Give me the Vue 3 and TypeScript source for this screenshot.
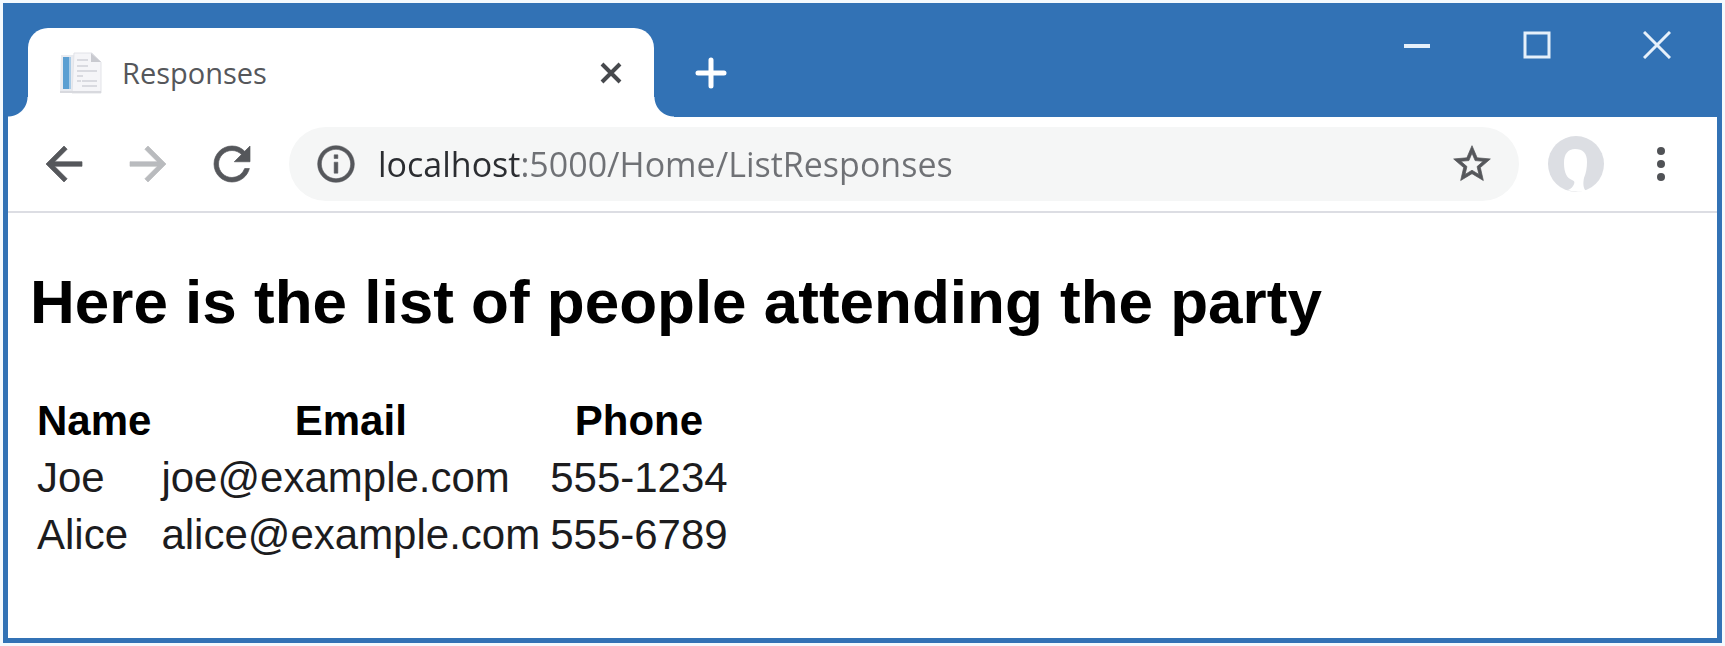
<script setup lang="ts">
import { ref } from 'vue'

interface Guest {
  name: string
  email: string
  phone: string
}

const address = ref('localhost:5000/Home/ListResponses')

const guests: Guest[] = [
  { name: 'Joe', email: 'joe@example.com', phone: '555-1234' },
  { name: 'Alice', email: 'alice@example.com', phone: '555-6789' },
]
</script>

<template>
  <div class="screen">
    <div class="window">
      <header class="titlebar">
        <div class="tab">
          <svg class="favicon" viewBox="0 0 42 42" aria-hidden="true">
            <path d="M1 3h14v38H0z" fill="#e9ebf0" />
            <path d="M3 5h6v32H3z" fill="#5b9fd2" />
            <path d="M9 5h2v32H9z" fill="#a9cce8" />
            <path d="M14 1h18l9 9v31H12z" fill="#f5f5f8" stroke="#e2e3e8" />
            <path d="M31 1v9h10z" fill="#c9cad0" />
            <path d="M17 8h11M17 14h11M17 19h20M17 24h6M17 29h4M22 29h15M22 34h15" stroke="#d9dae0" stroke-width="2" />
            <path d="M0 39h41v2H0z" fill="#d8d9de" />
          </svg>
          <span class="tab-title">Responses</span>
          <button class="tab-close" type="button" aria-label="Close tab">
            <svg viewBox="0 0 22 22" width="22" height="22"><path d="M2 2l18 18M20 2L2 20" stroke="#47494d" stroke-width="4" /></svg>
          </button>
        </div>
        <button class="new-tab" type="button" aria-label="New tab">
          <svg viewBox="0 0 32 32" width="32" height="32"><path d="M16 3v26M3 16h26" stroke="#fff" stroke-width="5" stroke-linecap="round" /></svg>
        </button>
        <div class="window-controls">
          <button type="button" aria-label="Minimize">
            <svg viewBox="0 0 28 28" width="28" height="28"><path d="M1 15h26" stroke="#e6f0fa" stroke-width="4" /></svg>
          </button>
          <button type="button" aria-label="Maximize">
            <svg viewBox="0 0 28 28" width="28" height="28"><path d="M2 2h24v24H2z" fill="none" stroke="#e6f0fa" stroke-width="3" /></svg>
          </button>
          <button type="button" aria-label="Close window">
            <svg viewBox="0 0 28 28" width="28" height="28"><path d="M1 1l26 26M27 1L1 27" stroke="#e6f0fa" stroke-width="3" /></svg>
          </button>
        </div>
      </header>

      <nav class="toolbar" aria-label="Navigation">
        <button type="button" aria-label="Back">
          <svg viewBox="0 0 24 24" width="54" height="54"><path fill="#55575b" stroke="#55575b" stroke-width=".3" d="M20 11H7.83l5.59-5.59L12 4l-8 8 8 8 1.41-1.41L7.83 13H20v-2z" /></svg>
        </button>
        <button type="button" aria-label="Forward" disabled>
          <svg viewBox="0 0 24 24" width="54" height="54"><path fill="#b9bbbe" stroke="#b9bbbe" stroke-width=".3" d="M12 4l-1.41 1.41L16.17 11H4v2h12.17l-5.58 5.59L12 20l8-8z" /></svg>
        </button>
        <button type="button" aria-label="Reload">
          <svg viewBox="0 0 24 24" width="54" height="54"><path fill="#55575b" stroke="#55575b" stroke-width=".3" d="M17.65 6.35A7.958 7.958 0 0 0 12 4c-4.42 0-7.99 3.58-7.99 8s3.57 8 7.99 8c3.73 0 6.84-2.55 7.73-6h-2.08A5.99 5.99 0 0 1 12 18c-3.31 0-6-2.69-6-6s2.69-6 6-6c1.66 0 3.14.69 4.22 1.78L13 11h7V4l-2.35 2.35z" /></svg>
        </button>
        <div class="omnibox">
          <button type="button" aria-label="Site information">
            <svg viewBox="0 0 24 24" width="44" height="44"><path fill="#55575b" stroke="#55575b" stroke-width=".3" d="M11 7h2v2h-2zm0 4h2v6h-2zm1-9C6.48 2 2 6.48 2 12s4.48 10 10 10 10-4.48 10-10S17.52 2 12 2zm0 18c-4.41 0-8-3.59-8-8s3.59-8 8-8 8 3.59 8 8-3.59 8-8 8z" /></svg>
          </button>
          <input v-model="address" class="address" type="text" aria-label="Address" spellcheck="false" />
          <button type="button" aria-label="Bookmark this page">
            <svg viewBox="0 0 24 24" width="44" height="44"><path fill="#55575b" stroke="#55575b" stroke-width=".4" d="M22 9.24l-7.19-.62L12 2 9.19 8.63 2 9.24l5.46 4.73L5.82 21 12 17.27 18.18 21l-1.63-7.03L22 9.24zM12 15.4l-3.76 2.27 1-4.28-3.32-2.88 4.38-.38L12 6.1l1.71 4.04 4.38.38-3.32 2.88 1 4.28L12 15.4z" /></svg>
          </button>
        </div>
        <button class="profile" type="button" aria-label="Profile">
          <svg viewBox="0 0 58 58" width="58" height="58">
            <circle cx="29" cy="29" r="28" fill="#dcdee3" />
            <path d="M28 14c-7 0-11 5-11 14 0 10 3 15 8 17 3 1 3 3 1 6-1 2-4 4-6 4q9 3 19 1c-3-3-3-8-2-13 2-5 3-10 3-16 0-9-4-13-12-13z" fill="#fff" />
          </svg>
        </button>
        <button type="button" aria-label="Menu">
          <svg viewBox="0 0 10 36" width="10" height="36" fill="#505256"><circle cx="5" cy="5" r="4" /><circle cx="5" cy="18" r="4" /><circle cx="5" cy="31" r="4" /></svg>
        </button>
      </nav>

      <main class="page">
        <h2>Here is the list of people attending the party</h2>
        <table>
          <thead>
            <tr>
              <th scope="col">Name</th>
              <th scope="col">Email</th>
              <th scope="col">Phone</th>
            </tr>
          </thead>
          <tbody>
            <tr v-for="guest in guests" :key="guest.email">
              <td>{{ guest.name }}</td>
              <td>{{ guest.email }}</td>
              <td>{{ guest.phone }}</td>
            </tr>
          </tbody>
        </table>
      </main>
    </div>
  </div>
</template>

<style>
body {
  margin: 0;
  background: #fff;
}
</style>

<style scoped>
.screen {
  --blue: #3272b5;
  box-sizing: border-box;
  display: flex;
  min-height: 100vh;
  padding: 3px;
  background: #f4f9fd;
  font-family: "Liberation Sans", Arial, sans-serif;
}

.window {
  flex: 1;
  min-width: 0;
  border: 5px solid var(--blue);
  background: #fff;
}

button {
  display: flex;
  align-items: center;
  justify-content: center;
  flex: none;
  padding: 0;
  border: 0;
  background: none;
}

.titlebar {
  display: flex;
  align-items: flex-start;
  background: var(--blue);
}

.tab {
  position: relative;
  box-sizing: border-box;
  display: flex;
  align-items: center;
  flex: 0 1 626px;
  min-width: 0;
  height: 89px;
  margin: 20px 0 0 20px;
  padding: 0 32px;
  border-radius: 20px 20px 0 0;
  background: #fff;
}

.tab::before,
.tab::after {
  content: "";
  position: absolute;
  bottom: 0;
  width: 20px;
  height: 20px;
}

.tab::before {
  right: 100%;
  background: radial-gradient(circle at 0 0, var(--blue) 19px, #fff 20px);
}

.tab::after {
  left: 100%;
  background: radial-gradient(circle at 100% 0, var(--blue) 19px, #fff 20px);
}

.favicon {
  flex: none;
  width: 42px;
  height: 42px;
}

.tab-title {
  flex: 1;
  min-width: 0;
  margin-left: 20px;
  overflow: hidden;
  color: #55575b;
  font: 29px/44px "Open Sans", "Noto Sans", sans-serif;
  white-space: nowrap;
}

.new-tab {
  width: 74px;
  height: 74px;
  margin: 28px 0 0 20px;
}

.window-controls {
  display: flex;
  margin-left: auto;
}

.window-controls button {
  width: 120px;
  height: 74px;
}

.toolbar {
  display: flex;
  align-items: center;
  padding: 10px 14px;
  border-bottom: 2px solid #dcdde3;
}

.toolbar > button {
  width: 84px;
  height: 74px;
}

.omnibox {
  box-sizing: border-box;
  display: flex;
  align-items: center;
  flex: 1;
  min-width: 0;
  height: 74px;
  margin: 0 28px 0 15px;
  padding: 0 25px;
  border-radius: 37px;
  background: #f5f6f6;
}

.address {
  flex: 1;
  min-width: 0;
  height: 54px;
  margin: 0 20px;
  padding: 0;
  border: 0;
  outline: 0;
  background: linear-gradient(to right, #2b2d31 144px, #6f7175 144px);
  background-clip: text;
  color: transparent;
  caret-color: #2b2d31;
  font: 34px/54px "Open Sans", "Noto Sans", sans-serif;
}

.toolbar > .profile {
  width: 58px;
  margin-right: 14px;
}

.page {
  padding: 54px 22px;
}

h2 {
  margin: 0 0 53px;
  color: #000;
  font-size: 62px;
  line-height: 70px;
}

table {
  border-spacing: 4px;
  color: #1c1c1e;
  font-size: 42px;
  line-height: 47px;
}

th,
td {
  padding: 3px;
}

th {
  color: #000;
}
</style>
